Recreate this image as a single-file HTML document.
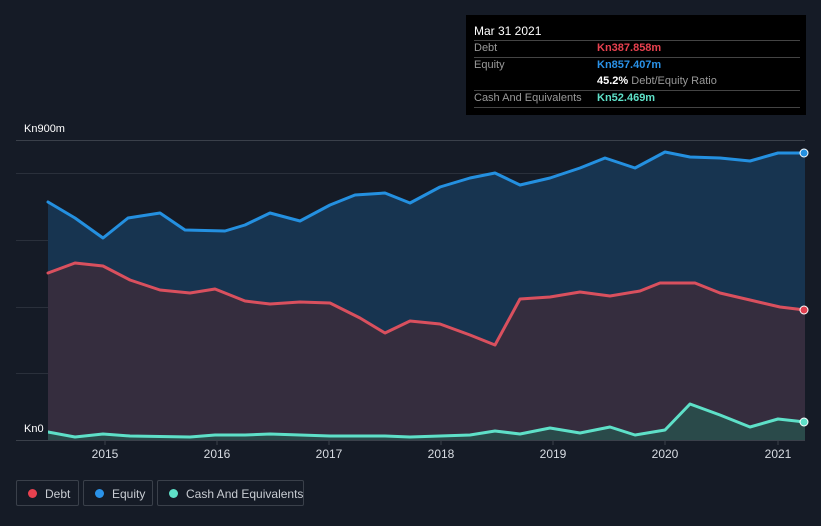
<!DOCTYPE html>
<html><head><style>
body{margin:0;width:821px;height:526px;background:#151b26;font-family:"Liberation Sans",sans-serif;overflow:hidden;position:relative}
.tt{position:absolute;left:466px;top:15px;width:340px;height:100px;background:#000;}
.tt div{position:absolute;font-size:11px;white-space:nowrap}
.ln{position:absolute;left:8px;width:326px;height:1px;background:#444}
.lg{position:absolute;top:480px;height:26px;border:1px solid #3a404a;border-radius:2px;color:#c8ccd2;font-size:12px;line-height:26px;box-sizing:border-box;white-space:nowrap}
.lg i{position:absolute;left:11px;top:8px;width:9px;height:9px;border-radius:50%}
</style></head><body>
<svg width="821" height="526" style="position:absolute;left:0;top:0">
<g stroke="#2a303b" stroke-width="1">
<line x1="16" y1="140.5" x2="805" y2="140.5" stroke="#3a404a"/>
<line x1="16" y1="173.5" x2="805" y2="173.5"/>
<line x1="16" y1="240.5" x2="805" y2="240.5"/>
<line x1="16" y1="307.5" x2="805" y2="307.5"/>
<line x1="16" y1="373.5" x2="805" y2="373.5"/>
<line x1="16" y1="440.5" x2="805" y2="440.5" stroke="#3a404a"/>
</g>
<polygon fill="#173450" points="48,202 75,218 103,238 128,218 160,213 185,230 225,231 245,225 270,213 300,221 330,205 355,195 385,193 410,203 440,187 470,178 495,173 520,185 550,178 580,168 605,158 635,168 665,152 690,157 720,158 750,161 778,153 805,153 805,440 48,440"/>
<polygon fill="#352d3e" points="48,273 75,263 103,266 130,280 160,290 190,293 215,289 245,301 270,304 300,302 330,303 360,318 385,333 410,321 440,324 470,335 495,345 520,299 550,297 580,292 610,296 640,291 660,283 695,283 720,293 750,300 780,307 805,310 805,440 48,440"/>
<polygon fill="#2a4a4a" points="48,432 75,437 103,434 130,436 190,437 215,435 245,435 270,434 330,436 385,436 410,437 470,435 495,431 520,434 550,428 580,433 610,427 635,435 665,430 690,404 720,415 750,427 778,419 805,422 805,440 48,440"/>
<g fill="none" stroke-width="3" stroke-linejoin="round" stroke-linecap="round">
<polyline stroke="#2490e0" points="48,202 75,218 103,238 128,218 160,213 185,230 225,231 245,225 270,213 300,221 330,205 355,195 385,193 410,203 440,187 470,178 495,173 520,185 550,178 580,168 605,158 635,168 665,152 690,157 720,158 750,161 778,153 805,153"/>
<polyline stroke="#d9505e" points="48,273 75,263 103,266 130,280 160,290 190,293 215,289 245,301 270,304 300,302 330,303 360,318 385,333 410,321 440,324 470,335 495,345 520,299 550,297 580,292 610,296 640,291 660,283 695,283 720,293 750,300 780,307 805,310"/>
<polyline stroke="#5ee0c8" points="48,432 75,437 103,434 130,436 190,437 215,435 245,435 270,434 330,436 385,436 410,437 470,435 495,431 520,434 550,428 580,433 610,427 635,435 665,430 690,404 720,415 750,427 778,419 805,422"/>
</g>
<circle cx="804" cy="153" r="4" fill="#2490e0" stroke="#fff" stroke-width="1"/>
<circle cx="804" cy="310" r="4" fill="#e04050" stroke="#fff" stroke-width="1"/>
<circle cx="804" cy="422" r="4" fill="#5ee0c8" stroke="#fff" stroke-width="1"/>
<rect x="16" y="419" width="32" height="17" fill="#151b26"/>
<g fill="#fff" font-size="11" font-family="Liberation Sans">
<text x="24" y="132">Kn900m</text>
<text x="24" y="432">Kn0</text>
</g>
<g fill="#d8dce2" font-size="12" font-family="Liberation Sans" text-anchor="middle">
<text x="105" y="458">2015</text><text x="217" y="458">2016</text><text x="329" y="458">2017</text><text x="441" y="458">2018</text><text x="553" y="458">2019</text><text x="665" y="458">2020</text><text x="778" y="458">2021</text>
</g>
<g stroke="#3a404a"><line x1="105" y1="440" x2="105" y2="445"/><line x1="217" y1="440" x2="217" y2="445"/><line x1="329" y1="440" x2="329" y2="445"/><line x1="441" y1="440" x2="441" y2="445"/><line x1="553" y1="440" x2="553" y2="445"/><line x1="665" y1="440" x2="665" y2="445"/><line x1="778" y1="440" x2="778" y2="445"/></g>
</svg>
<div class="tt">
<div style="left:8px;top:9px;color:#fff;font-size:12px">Mar 31 2021</div>
<div class="ln" style="top:25px"></div>
<div style="left:8px;top:27px;color:#999">Debt</div><div style="left:131px;top:27px;color:#e8414f;font-weight:bold">Kn387.858m</div>
<div class="ln" style="top:42px"></div>
<div style="left:8px;top:44px;color:#999">Equity</div><div style="left:131px;top:44px;color:#2a92e8;font-weight:bold">Kn857.407m</div>
<div style="left:131px;top:60px;color:#fff"><b>45.2%</b> <span style="color:#999">Debt/Equity Ratio</span></div>
<div class="ln" style="top:75px"></div>
<div style="left:8px;top:77px;color:#999">Cash And Equivalents</div><div style="left:131px;top:77px;color:#5ee0c8;font-weight:bold">Kn52.469m</div>
<div class="ln" style="top:92px"></div>
</div>
<div class="lg" style="left:16px;width:63px"><i style="background:#e8414f"></i><span style="position:absolute;left:28px">Debt</span></div>
<div class="lg" style="left:83px;width:70px"><i style="background:#2a92e8"></i><span style="position:absolute;left:28px">Equity</span></div>
<div class="lg" style="left:157px;width:147px"><i style="background:#5ee0c8"></i><span style="position:absolute;left:28px">Cash And Equivalents</span></div>
</body></html>
